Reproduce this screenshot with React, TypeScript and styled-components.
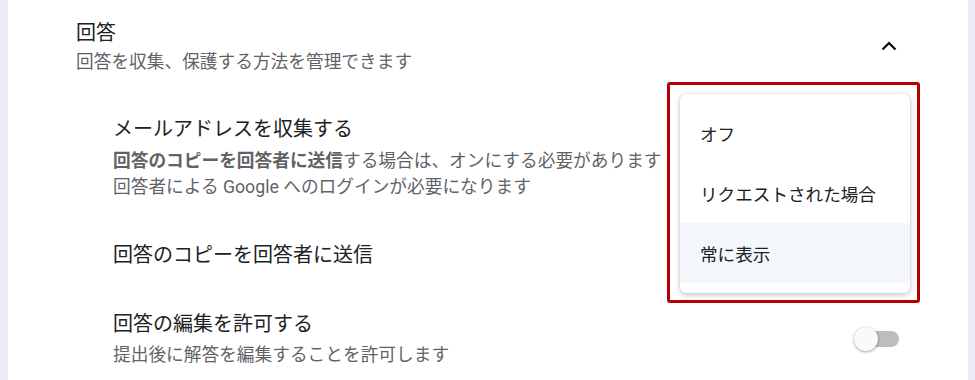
import React from "react";
import styled, { createGlobalStyle } from "styled-components";

const GlobalStyle = createGlobalStyle`
  html, body {
    margin: 0;
    padding: 0;
    background: #f0ebf8;
  }
  body {
    font-family: Roboto, "Noto Sans CJK JP", "Noto Sans", sans-serif;
    color: #202124;
  }
`;

const options = ["オフ", "リクエストされた場合", "常に表示"];

const Page = styled.div`
  height: 380px;
  padding: 0 7px 0 8px;
  overflow: hidden;
`;

const Card = styled.section`
  position: relative;
  height: 380px;
  box-sizing: border-box;
  background: #fff;
  padding: 19px 69px 0 68px;
`;

const SectionHeader = styled.div`
  display: flex;
  align-items: center;
  justify-content: space-between;
`;

const Title = styled.div<{ $size?: number }>`
  font-size: ${(p) => p.$size ?? 20}px;
  line-height: 28px;
  color: #202124;
`;

const Sub = styled.div<{ $gap?: number }>`
  font-size: 17.7px;
  line-height: 26px;
  color: #5f6368;
  margin-top: ${(p) => p.$gap ?? 0}px;
  b {
    font-weight: 700;
  }
`;

const Chevron = styled.button`
  display: flex;
  border: 0;
  background: none;
  padding: 0;
  margin: 0 2px 3px 0;
  cursor: pointer;
`;

const SettingList = styled.div`
  display: flex;
  flex-direction: column;
  gap: 41px;
  margin-top: 40px;
  padding-left: 37px;
`;

const SettingRow = styled.div`
  display: flex;
  align-items: center;
  justify-content: space-between;
`;

const Switch = styled.span`
  position: relative;
  display: block;
  width: 45px;
  height: 24px;
  &::before {
    content: "";
    position: absolute;
    left: 5px;
    top: 4px;
    width: 40px;
    height: 16px;
    border-radius: 8px;
    background: #bdbdbd;
  }
  &::after {
    content: "";
    position: absolute;
    left: 0;
    top: 0;
    width: 24px;
    height: 24px;
    border-radius: 50%;
    background: #fafafa;
    box-shadow: 0 1px 3px rgba(0, 0, 0, 0.35), 0 0 1px rgba(0, 0, 0, 0.15);
  }
`;

const Highlight = styled.div`
  position: absolute;
  left: 659px;
  top: 82px;
  width: 253px;
  box-sizing: border-box;
  border: 3px solid #b30000;
  border-radius: 3px;
  padding: 9px 7px 7px 10px;
`;

const Menu = styled.ul`
  list-style: none;
  margin: 0;
  padding: 9px 0 10px;
  background: #fff;
  border-radius: 6px;
  box-shadow: 0 2px 6px rgba(0, 0, 0, 0.22), 0 0 2px rgba(0, 0, 0, 0.12);
`;

const MenuItem = styled.li<{ $active?: boolean }>`
  display: flex;
  align-items: center;
  height: 60px;
  padding-left: 20px;
  font-size: 17.6px;
  color: #202124;
  background: ${(p) => (p.$active ? "#f4f7fc" : "transparent")};
`;

export default function App() {
  return (
    <Page>
      <GlobalStyle />
      <Card>
        <SectionHeader>
          <div>
            <Title>回答</Title>
            <Sub $gap={2}>回答を収集、保護する方法を管理できます</Sub>
          </div>
          <Chevron aria-label="折りたたむ">
            <svg width="16" height="10" viewBox="0 0 16 10">
              <polyline
                points="1.5,8.5 8,2 14.5,8.5"
                fill="none"
                stroke="#000"
                strokeWidth="2.2"
              />
            </svg>
          </Chevron>
        </SectionHeader>

        <SettingList>
          <SettingRow>
            <div>
              <Title>メールアドレスを収集する</Title>
              <Sub $gap={5}>
                <b>回答のコピーを回答者に送信</b>する場合は、オンにする必要があります
              </Sub>
              <Sub>回答者による Google へのログインが必要になります</Sub>
            </div>
          </SettingRow>
          <SettingRow>
            <Title>回答のコピーを回答者に送信</Title>
          </SettingRow>
          <SettingRow>
            <div>
              <Title>回答の編集を許可する</Title>
              <Sub $gap={4}>提出後に解答を編集することを許可します</Sub>
            </div>
            <Switch role="switch" aria-checked="false" />
          </SettingRow>
        </SettingList>

        <Highlight>
          <Menu>
            {options.map((o, i) => (
              <MenuItem key={o} $active={i === options.length - 1}>
                {o}
              </MenuItem>
            ))}
          </Menu>
        </Highlight>
      </Card>
    </Page>
  );
}
